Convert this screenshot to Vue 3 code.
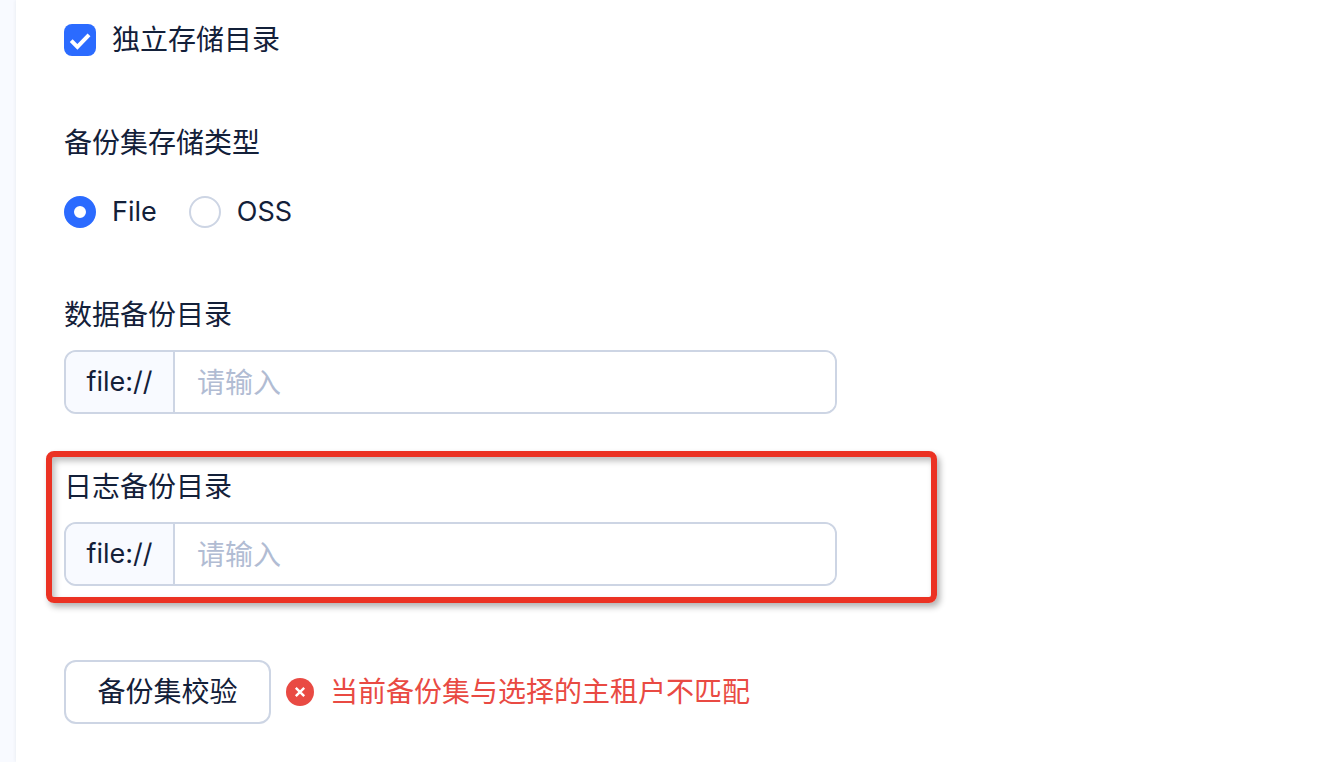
<script setup>
import { ref } from 'vue'

const separateDirs = ref(true)
const storageType = ref('File')
const storageTypes = ['File', 'OSS']
const dataDir = ref('')
const logDir = ref('')
</script>

<template>
  <div class="page">
    <main class="panel">
      <label class="choice">
        <input v-model="separateDirs" type="checkbox" class="visually-native" />
        <span class="box">
          <svg viewBox="0 0 32 32" aria-hidden="true">
            <path d="M7.2 16.6 L13.4 22.8 L25 10.8" />
          </svg>
        </span>
        <span>独立存储目录</span>
      </label>

      <fieldset class="group">
        <legend class="title">备份集存储类型</legend>
        <div class="radios">
          <label v-for="type in storageTypes" :key="type" class="choice latin">
            <input v-model="storageType" type="radio" name="storage" :value="type" class="radio" />
            <span>{{ type }}</span>
          </label>
        </div>
      </fieldset>

      <div class="field data-field">
        <label class="title" for="data-dir">数据备份目录</label>
        <div class="input-group">
          <span class="addon latin">file://</span>
          <input id="data-dir" v-model="dataDir" type="text" placeholder="请输入" />
        </div>
      </div>

      <div class="field log-field">
        <label class="title" for="log-dir">日志备份目录</label>
        <div class="input-group">
          <span class="addon latin">file://</span>
          <input id="log-dir" v-model="logDir" type="text" placeholder="请输入" />
        </div>
        <div class="highlight"></div>
      </div>

      <div class="actions">
        <button type="button" class="verify">备份集校验</button>
        <p class="error" role="alert">
          <svg viewBox="0 0 28 28" aria-hidden="true">
            <circle cx="14" cy="14" r="14" />
            <path d="M9.8 9.8 L18.2 18.2 M18.2 9.8 L9.8 18.2" />
          </svg>
          <span>当前备份集与选择的主租户不匹配</span>
        </p>
      </div>
    </main>
  </div>
</template>

<style>
body {
  margin: 0;
  background: #f8faff;
}
</style>

<style scoped>
.page {
  min-height: 100vh;
  display: flex;
  box-sizing: border-box;
  padding-left: 16px;
  background: #f8faff;
  color: #132039;
  font-family: Inter, "Noto Sans CJK SC", sans-serif;
  font-size: 28px;
  line-height: 44px;
}

.panel {
  flex: 1;
  min-width: 0;
  box-sizing: border-box;
  padding: 18px 48px;
  background: #fff;
  box-shadow: 0 0 4px rgba(19, 32, 57, 0.08);
}

.latin {
  font-size: 27px;
}

.choice {
  position: relative;
  display: flex;
  align-items: center;
  gap: 16px;
  width: fit-content;
}

.visually-native {
  position: absolute;
  width: 32px;
  height: 32px;
  margin: 0;
  opacity: 0;
}

.box {
  width: 32px;
  height: 32px;
  box-sizing: border-box;
  border: 2px solid #cdd5e4;
  border-radius: 8px;
  background: #fff;
}

.box svg {
  display: none;
}

.visually-native:checked + .box {
  border: 0;
  background: #2b6bff;
}

.visually-native:checked + .box svg {
  display: block;
  fill: none;
  stroke: #fff;
  stroke-width: 4;
}

.group {
  margin: 59px 0 0;
  padding: 0;
  border: 0;
}

.title {
  display: block;
  padding: 0;
}

.radios {
  display: flex;
  gap: 32px;
  margin-top: 25px;
}

.radio {
  appearance: none;
  width: 32px;
  height: 32px;
  margin: 0;
  border: 2px solid #cdd5e4;
  border-radius: 50%;
  background: #fff;
}

.radio:checked {
  border: 10px solid #2b6bff;
}

.field {
  position: relative;
  max-width: 773px;
}

.data-field {
  margin-top: 59px;
}

.log-field {
  margin-top: 51px;
}

.input-group {
  display: flex;
  margin-top: 13px;
  height: 64px;
  box-sizing: border-box;
  border: 2px solid #cdd5e4;
  border-radius: 12px;
  overflow: hidden;
}

.addon {
  display: flex;
  align-items: center;
  justify-content: center;
  width: 109px;
  box-sizing: border-box;
  border-right: 2px solid #cdd5e4;
  background: #f8faff;
}

.input-group input {
  flex: 1;
  min-width: 0;
  padding: 2px 22px 0;
  border: 0;
  outline: 0;
  background: #fff;
  color: inherit;
  font: inherit;
}

.input-group input::placeholder {
  color: #b1bcd3;
  opacity: 1;
}

.highlight {
  position: absolute;
  inset: -14px -100px -17px -18px;
  border: 6px solid #eb3223;
  border-radius: 8px;
  box-shadow: 3px 4px 6px rgba(0, 0, 0, 0.3), inset 3px 4px 6px rgba(0, 0, 0, 0.26);
  pointer-events: none;
}

.actions {
  display: flex;
  align-items: center;
  gap: 15px;
  margin-top: 74px;
}

.verify {
  min-width: 207px;
  height: 64px;
  padding: 0 28px;
  border: 2px solid #cdd5e4;
  border-radius: 12px;
  background: #fff;
  color: inherit;
  font: inherit;
}

.error {
  display: flex;
  align-items: center;
  gap: 16px;
  margin: 0;
  color: #e94a43;
}

.error svg {
  width: 28px;
  height: 28px;
  fill: #e94a43;
}

.error path {
  stroke: #fff;
  stroke-width: 2.4;
}
</style>
